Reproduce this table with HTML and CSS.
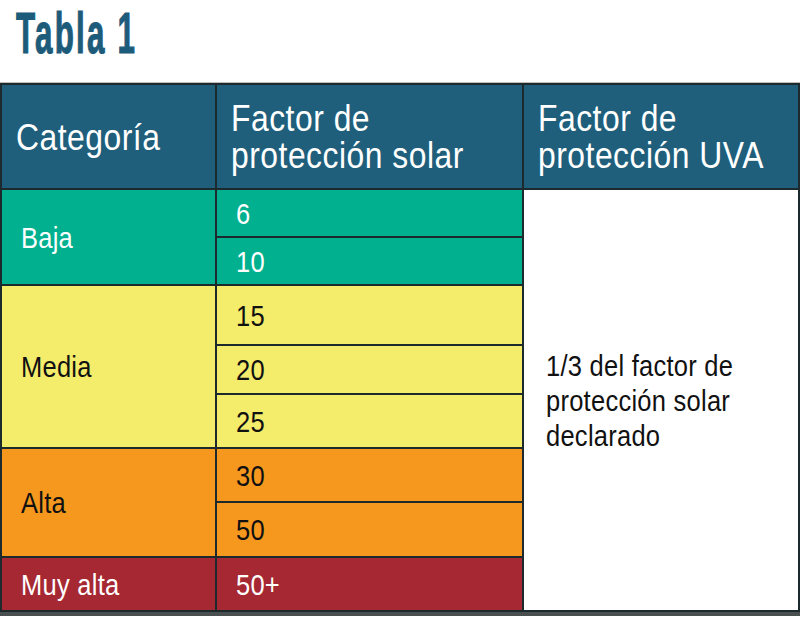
FILE: index.html
```html
<!DOCTYPE html>
<html lang="es">
<head>
<meta charset="utf-8">
<title>Tabla 1</title>
<link rel="stylesheet" href="styles.css">
</head>
<body>
<h1 class="title"><span class="title-text">Tabla 1</span></h1>
<div class="table">
  <div class="cell head"><span class="t">Categoría</span></div>
  <div class="cell head"><span class="t">Factor de</span><span class="t">protección solar</span></div>
  <div class="cell head"><span class="t">Factor de</span><span class="t">protección UVA</span></div>

  <div class="cell cat green span2"><span class="t">Baja</span></div>
  <div class="cell val green r1"><span class="t">6</span></div>
  <div class="cell uva"><span class="t">1/3 del factor de</span><span class="t">protección solar</span><span class="t">declarado</span></div>
  <div class="cell val green r2"><span class="t">10</span></div>

  <div class="cell cat yellow span3"><span class="t">Media</span></div>
  <div class="cell val yellow r3"><span class="t">15</span></div>
  <div class="cell val yellow r4"><span class="t">20</span></div>
  <div class="cell val yellow r5"><span class="t">25</span></div>

  <div class="cell cat orange span2b"><span class="t">Alta</span></div>
  <div class="cell val orange r6"><span class="t">30</span></div>
  <div class="cell val orange r7"><span class="t">50</span></div>

  <div class="cell cat red r8c"><span class="t">Muy alta</span></div>
  <div class="cell val red r8"><span class="t">50+</span></div>
</div>
<div class="shadow"></div>
</body>
</html>
```
FILE: styles.css
```css
html, body {
  margin: 0;
  padding: 0;
  background: #ffffff;
}
body {
  width: 800px;
  font-family: "Liberation Sans", Arial, sans-serif;
}
.title {
  margin: 0;
  padding: 0 0 0 16px;
  height: 83px;
  box-sizing: border-box;
  font-size: 57px;
  line-height: 66px;
  font-weight: bold;
  color: #1d5b7a;
}
.title-text {
  display: inline-block;
  transform: scaleX(0.55);
  transform-origin: 0 50%;
  letter-spacing: 4px;
  -webkit-text-stroke: 1.2px #1d5b7a;
  white-space: nowrap;
}
.table {
  width: 800px;
  box-sizing: border-box;
  display: grid;
  grid-template-columns: 213px 305px 274px;
  grid-template-rows: 103px 46px 46px 58px 47px 52px 52px 53px 52px;
  gap: 2px;
  background: #1c2a2e;
  border: 2px solid #1c2a2e;
  box-shadow: 0 -1px 0 #bdbdbd;
}
.cell {
  display: flex;
  flex-direction: column;
  justify-content: center;
  font-size: 30px;
  line-height: 35px;
  overflow: hidden;
}
.t {
  display: block;
  white-space: nowrap;
  transform: scaleX(0.85);
  transform-origin: 0 50%;
  letter-spacing: 0.3px;
}
.head {
  background: #1f5f7c;
  color: #ffffff;
  font-size: 37px;
  line-height: 37px;
  padding-left: 14px;
  padding-top: 1px;
}
.head .t {
  transform: scaleX(0.86);
  letter-spacing: 0.6px;
}
.head:first-child { padding-left: 14px; }
.cat { padding-left: 19px; }
.val { padding-left: 19px; }
.green { background: #00b08f; color: #ffffff; }
.yellow { background: #f4ec6b; color: #111111; }
.orange { background: #f7981e; color: #111111; }
.red { background: #a52832; color: #ffffff; }
.span2 { grid-column: 1; grid-row: 2 / span 2; }
.span3 { grid-column: 1; grid-row: 4 / span 3; }
.span2b { grid-column: 1; grid-row: 7 / span 2; }
.r8c { grid-column: 1; grid-row: 9; }
.r1 { grid-column: 2; grid-row: 2; }
.r2 { grid-column: 2; grid-row: 3; }
.r3 { grid-column: 2; grid-row: 4; }
.r4 { grid-column: 2; grid-row: 5; }
.r5 { grid-column: 2; grid-row: 6; }
.r6 { grid-column: 2; grid-row: 7; }
.r7 { grid-column: 2; grid-row: 8; }
.r8 { grid-column: 2; grid-row: 9; }
.uva {
  grid-column: 3;
  grid-row: 2 / span 8;
  background: #ffffff;
  color: #111111;
  padding-left: 22px;
  padding-top: 1px;
}
.shadow {
  height: 4px;
  width: 800px;
  background: #4a4f50;
}
```
